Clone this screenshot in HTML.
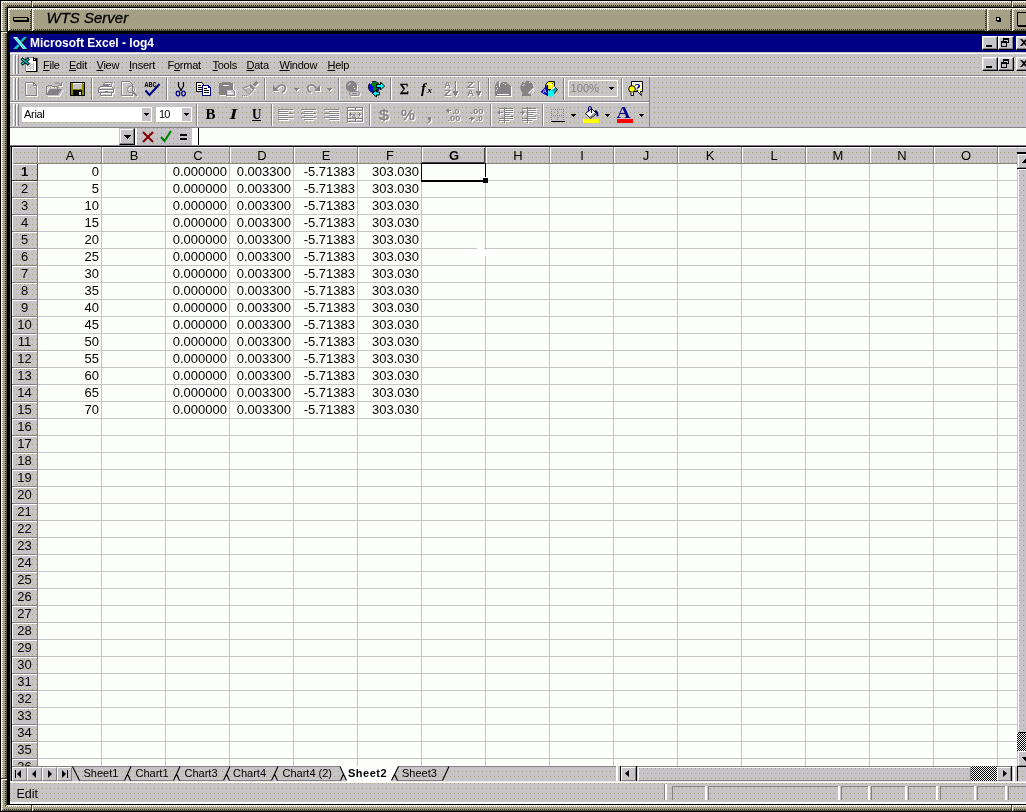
<!DOCTYPE html>
<html><head><meta charset="utf-8"><title>Microsoft Excel - log4</title>
<style>
*{box-sizing:border-box;margin:0;padding:0}
html,body{width:1026px;height:812px;overflow:hidden;background:#000}
body{position:relative;font-family:"Liberation Sans",sans-serif;font-size:11px;color:#000;-webkit-font-smoothing:none}
.a{position:absolute}
.dg{background-color:#c6c4c6;background-image:linear-gradient(to bottom,transparent 1px,#c6c4c6 1px),linear-gradient(to right,#a8a278 1px,#c6c4c6 1px);background-size:100% 5px,4px 100%}
.ol{background:#a5a085}
.hlh{background:repeating-linear-gradient(to right,#fbf8ee 0 1px,#a5a085 1px 2px)}
.hlv{background:repeating-linear-gradient(to bottom,#fbf8ee 0 1px,#a5a085 1px 2px)}
.shh{background:repeating-linear-gradient(to right,#a5a085 0 1px,#2e2c20 1px 2px)}
.shv{background:repeating-linear-gradient(to bottom,#a5a085 0 1px,#2e2c20 1px 2px)}
.lt{background:#f2efe2}
.dk{background:#4e4b3a}
.t{white-space:nowrap;line-height:1}
#r{position:absolute;left:0;top:0;width:1026px;height:812px;overflow:hidden;will-change:transform}
svg{position:absolute;overflow:visible}
.ew{stroke:#fff;fill:none}.ew .f{fill:#fff;stroke:none}.eg{stroke:#848284;fill:none}.eg .f{fill:#848284;stroke:none}
.m{font-size:11px;line-height:13px;text-align:left}
.m u{text-decoration:underline;text-underline-offset:1px}
</style></head>
<body>
<div id="r">
<div class="a ol" style="left:1px;top:1px;width:1030px;height:6px;"></div>
<div class="a ol" style="left:1px;top:1px;width:6px;height:810px;"></div>
<div class="a ol" style="left:1px;top:805px;width:1030px;height:6px;"></div>
<div class="a lt" style="left:1px;top:1px;width:1030px;height:1px;"></div>
<div class="a hlh" style="left:2px;top:2px;width:1030px;height:1px;"></div>
<div class="a lt" style="left:1px;top:1px;width:1px;height:810px;"></div>
<div class="a hlv" style="left:2px;top:2px;width:1px;height:808px;"></div>
<div class="a shh" style="left:6px;top:5px;width:1030px;height:1px;"></div>
<div class="a dk" style="left:7px;top:6px;width:1030px;height:1px;"></div>
<div class="a shv" style="left:5px;top:6px;width:1px;height:800px;"></div>
<div class="a dk" style="left:6px;top:7px;width:1px;height:798px;"></div>
<div class="a lt" style="left:7px;top:805px;width:1030px;height:1px;"></div>
<div class="a hlh" style="left:6px;top:806px;width:1030px;height:1px;"></div>
<div class="a shh" style="left:3px;top:809px;width:1030px;height:1px;"></div>
<div class="a dk" style="left:2px;top:810px;width:1030px;height:1px;"></div>
<div class="a " style="left:31px;top:1px;width:1px;height:6px;background:#3a382e"></div>
<div class="a lt" style="left:32px;top:1px;width:1px;height:6px;"></div>
<div class="a " style="left:1px;top:31px;width:6px;height:1px;background:#3a382e"></div>
<div class="a lt" style="left:1px;top:32px;width:6px;height:1px;"></div>
<div class="a " style="left:1px;top:778px;width:6px;height:1px;background:#3a382e"></div>
<div class="a lt" style="left:1px;top:779px;width:6px;height:1px;"></div>
<div class="a " style="left:1011px;top:1px;width:1px;height:6px;background:#3a382e"></div>
<div class="a lt" style="left:1012px;top:1px;width:1px;height:6px;"></div>
<div class="a " style="left:31px;top:805px;width:1px;height:6px;background:#3a382e"></div>
<div class="a lt" style="left:32px;top:805px;width:1px;height:6px;"></div>
<div class="a " style="left:1011px;top:805px;width:1px;height:6px;background:#3a382e"></div>
<div class="a lt" style="left:1012px;top:805px;width:1px;height:6px;"></div>
<div class="a ol" style="left:8px;top:8px;width:24px;height:23px;"></div>
<div class="a lt" style="left:8px;top:8px;width:24px;height:1px;"></div>
<div class="a hlh" style="left:8px;top:9px;width:24px;height:1px;"></div>
<div class="a lt" style="left:8px;top:8px;width:1px;height:23px;"></div>
<div class="a hlv" style="left:9px;top:9px;width:1px;height:22px;"></div>
<div class="a shh" style="left:10px;top:29px;width:22px;height:1px;"></div>
<div class="a dk" style="left:9px;top:30px;width:23px;height:1px;"></div>
<div class="a shv" style="left:30px;top:10px;width:1px;height:21px;"></div>
<div class="a dk" style="left:31px;top:9px;width:1px;height:22px;"></div>
<div class="a ol" style="left:32px;top:8px;width:955px;height:23px;"></div>
<div class="a lt" style="left:32px;top:8px;width:955px;height:1px;"></div>
<div class="a hlh" style="left:32px;top:9px;width:955px;height:1px;"></div>
<div class="a lt" style="left:32px;top:8px;width:1px;height:23px;"></div>
<div class="a hlv" style="left:33px;top:9px;width:1px;height:22px;"></div>
<div class="a shh" style="left:34px;top:29px;width:953px;height:1px;"></div>
<div class="a dk" style="left:33px;top:30px;width:954px;height:1px;"></div>
<div class="a shv" style="left:985px;top:10px;width:1px;height:21px;"></div>
<div class="a dk" style="left:986px;top:9px;width:1px;height:22px;"></div>
<div class="a ol" style="left:987px;top:8px;width:25px;height:23px;"></div>
<div class="a lt" style="left:987px;top:8px;width:25px;height:1px;"></div>
<div class="a hlh" style="left:987px;top:9px;width:25px;height:1px;"></div>
<div class="a lt" style="left:987px;top:8px;width:1px;height:23px;"></div>
<div class="a hlv" style="left:988px;top:9px;width:1px;height:22px;"></div>
<div class="a shh" style="left:989px;top:29px;width:23px;height:1px;"></div>
<div class="a dk" style="left:988px;top:30px;width:24px;height:1px;"></div>
<div class="a shv" style="left:1010px;top:10px;width:1px;height:21px;"></div>
<div class="a dk" style="left:1011px;top:9px;width:1px;height:22px;"></div>
<div class="a ol" style="left:1012px;top:8px;width:25px;height:23px;"></div>
<div class="a lt" style="left:1012px;top:8px;width:25px;height:1px;"></div>
<div class="a hlh" style="left:1012px;top:9px;width:25px;height:1px;"></div>
<div class="a lt" style="left:1012px;top:8px;width:1px;height:23px;"></div>
<div class="a hlv" style="left:1013px;top:9px;width:1px;height:22px;"></div>
<div class="a shh" style="left:1014px;top:29px;width:23px;height:1px;"></div>
<div class="a dk" style="left:1013px;top:30px;width:24px;height:1px;"></div>
<div class="a shv" style="left:1035px;top:10px;width:1px;height:21px;"></div>
<div class="a dk" style="left:1036px;top:9px;width:1px;height:22px;"></div>
<div class="a " style="left:13px;top:17px;width:15px;height:4px;background:#a5a085;border:1px solid #000;box-shadow:1px 1px 0 #000"></div>
<div class="a " style="left:996px;top:17px;width:4px;height:4px;background:#efebdc;border:1px solid #000;box-shadow:1px 1px 0 #000"></div>
<div class="a " style="left:1017px;top:12px;width:14px;height:14px;background:#a5a085;border:1px solid #000;box-shadow:1px 1px 0 #000"></div>
<div class="a t " style="left:46.5px;top:9px;font-size:15px;font-style:italic;line-height:17px;-webkit-text-stroke:0.3px #000">WTS Server</div>
<div class="a " style="left:10px;top:34px;width:1020px;height:18px;background:#000084"></div>
<div class="a t " style="left:30px;top:36px;font-size:12px;font-weight:bold;color:#fff;line-height:14px">Microsoft Excel - log4</div>
<div class="a dg" style="left:10px;top:52px;width:1020px;height:76px;"></div>
<div class="a " style="left:10px;top:52px;width:1020px;height:1px;background:#c6c4c6"></div>
<div class="a " style="left:10px;top:53px;width:1020px;height:1px;background:#ffffff"></div>
<div class="a " style="left:10px;top:75px;width:1020px;height:1px;background:#848284"></div>
<div class="a " style="left:10px;top:76px;width:1020px;height:1px;background:#ffffff"></div>
<div class="a " style="left:10px;top:126px;width:1020px;height:1px;background:#c6c4c6"></div>
<div class="a " style="left:10px;top:127px;width:1020px;height:1px;background:#848284"></div>
<div class="a " style="left:10px;top:101px;width:640px;height:1px;background:#848284"></div>
<div class="a " style="left:10px;top:102px;width:640px;height:1px;background:#ffffff"></div>
<div class="a " style="left:649px;top:77px;width:1px;height:50px;background:#848284"></div>
<div class="a " style="left:650px;top:77px;width:1px;height:50px;background:#c6c4c6"></div>
<div class="a " style="left:13px;top:55px;width:1px;height:19px;background:#ffffff"></div>
<div class="a " style="left:14px;top:55px;width:1px;height:19px;background:#c6c4c6"></div>
<div class="a " style="left:15px;top:55px;width:1px;height:19px;background:#848284"></div>
<div class="a " style="left:13px;top:55px;width:2px;height:1px;background:#ffffff"></div>
<div class="a " style="left:16px;top:55px;width:1px;height:19px;background:#ffffff"></div>
<div class="a " style="left:17px;top:55px;width:1px;height:19px;background:#c6c4c6"></div>
<div class="a " style="left:18px;top:55px;width:1px;height:19px;background:#848284"></div>
<div class="a " style="left:16px;top:55px;width:2px;height:1px;background:#ffffff"></div>
<div class="a " style="left:13px;top:78px;width:1px;height:22px;background:#ffffff"></div>
<div class="a " style="left:14px;top:78px;width:1px;height:22px;background:#c6c4c6"></div>
<div class="a " style="left:15px;top:78px;width:1px;height:22px;background:#848284"></div>
<div class="a " style="left:13px;top:78px;width:2px;height:1px;background:#ffffff"></div>
<div class="a " style="left:16px;top:78px;width:1px;height:22px;background:#ffffff"></div>
<div class="a " style="left:17px;top:78px;width:1px;height:22px;background:#c6c4c6"></div>
<div class="a " style="left:18px;top:78px;width:1px;height:22px;background:#848284"></div>
<div class="a " style="left:16px;top:78px;width:2px;height:1px;background:#ffffff"></div>
<div class="a " style="left:13px;top:104px;width:1px;height:22px;background:#ffffff"></div>
<div class="a " style="left:14px;top:104px;width:1px;height:22px;background:#c6c4c6"></div>
<div class="a " style="left:15px;top:104px;width:1px;height:22px;background:#848284"></div>
<div class="a " style="left:13px;top:104px;width:2px;height:1px;background:#ffffff"></div>
<div class="a " style="left:16px;top:104px;width:1px;height:22px;background:#ffffff"></div>
<div class="a " style="left:17px;top:104px;width:1px;height:22px;background:#c6c4c6"></div>
<div class="a " style="left:18px;top:104px;width:1px;height:22px;background:#848284"></div>
<div class="a " style="left:16px;top:104px;width:2px;height:1px;background:#ffffff"></div>
<div class="a t m" style="left:43.0px;top:59px;letter-spacing:-0.25px"><u>F</u>ile</div>
<div class="a t m" style="left:69.0px;top:59px;letter-spacing:-0.25px"><u>E</u>dit</div>
<div class="a t m" style="left:96.5px;top:59px;letter-spacing:-0.25px"><u>V</u>iew</div>
<div class="a t m" style="left:129.0px;top:59px;letter-spacing:-0.25px"><u>I</u>nsert</div>
<div class="a t m" style="left:167.5px;top:59px;letter-spacing:-0.25px">F<u>o</u>rmat</div>
<div class="a t m" style="left:212.5px;top:59px;letter-spacing:-0.25px"><u>T</u>ools</div>
<div class="a t m" style="left:246.5px;top:59px;letter-spacing:-0.25px"><u>D</u>ata</div>
<div class="a t m" style="left:279.5px;top:59px;letter-spacing:-0.25px"><u>W</u>indow</div>
<div class="a t m" style="left:327.5px;top:59px;letter-spacing:-0.25px"><u>H</u>elp</div>
<div class="a " style="left:982px;top:36px;width:16px;height:14px;background:#c6c4c6;border:1px solid;border-color:#fff #000 #000 #fff;box-shadow:inset -1px -1px 0 #848284,inset 1px 1px 0 #e0e0e0"></div>
<div class="a " style="left:986px;top:45px;width:6px;height:2px;background:#000000"></div>
<div class="a " style="left:998px;top:36px;width:16px;height:14px;background:#c6c4c6;border:1px solid;border-color:#fff #000 #000 #fff;box-shadow:inset -1px -1px 0 #848284,inset 1px 1px 0 #e0e0e0"></div>
<svg style="left:998px;top:36px" width="16" height="14" viewBox="0 0 16 14" shape-rendering="crispEdges" ><path d="M5 2h6v2h-6zM5 4h1v1h-1zM10 4h1v3h-2v-1h1zM3 5h6v2h-6zM3 7h1v4h-1zM8 7h1v4h-1zM4 10h4v1h-4z" fill="#000"/></svg>
<div class="a " style="left:1016px;top:36px;width:16px;height:14px;background:#c6c4c6;border:1px solid;border-color:#fff #000 #000 #fff;box-shadow:inset -1px -1px 0 #848284,inset 1px 1px 0 #e0e0e0"></div>
<svg style="left:1016px;top:36px" width="16" height="14" viewBox="0 0 16 14" shape-rendering="crispEdges" ><path d="M4 3h2l2 2l2-2h2l-3 3.5l3 3.5h-2l-2-2l-2 2h-2l3-3.5z" fill="#000" shape-rendering="auto"/></svg>
<div class="a " style="left:982px;top:57px;width:16px;height:14px;background:#c6c4c6;border:1px solid;border-color:#fff #000 #000 #fff;box-shadow:inset -1px -1px 0 #848284,inset 1px 1px 0 #e0e0e0"></div>
<div class="a " style="left:986px;top:66px;width:6px;height:2px;background:#000000"></div>
<div class="a " style="left:998px;top:57px;width:16px;height:14px;background:#c6c4c6;border:1px solid;border-color:#fff #000 #000 #fff;box-shadow:inset -1px -1px 0 #848284,inset 1px 1px 0 #e0e0e0"></div>
<svg style="left:998px;top:57px" width="16" height="14" viewBox="0 0 16 14" shape-rendering="crispEdges" ><path d="M5 2h6v2h-6zM5 4h1v1h-1zM10 4h1v3h-2v-1h1zM3 5h6v2h-6zM3 7h1v4h-1zM8 7h1v4h-1zM4 10h4v1h-4z" fill="#000"/></svg>
<div class="a " style="left:1016px;top:57px;width:16px;height:14px;background:#c6c4c6;border:1px solid;border-color:#fff #000 #000 #fff;box-shadow:inset -1px -1px 0 #848284,inset 1px 1px 0 #e0e0e0"></div>
<svg style="left:1016px;top:57px" width="16" height="14" viewBox="0 0 16 14" shape-rendering="crispEdges" ><path d="M4 3h2l2 2l2-2h2l-3 3.5l3 3.5h-2l-2-2l-2 2h-2l3-3.5z" fill="#000" shape-rendering="auto"/></svg>
<div class="a " style="left:10px;top:128px;width:1020px;height:17px;background:#fcfefc"></div>
<div class="a " style="left:119px;top:128px;width:16px;height:17px;background:#c6c4c6;border:1px solid;border-color:#c6c4c6 #000 #000 #c6c4c6;box-shadow:inset -1px -1px 0 #848284,inset 1px 1px 0 #fff"></div>
<svg style="left:120px;top:128px" width="15" height="17" viewBox="0 0 15 17" shape-rendering="crispEdges" ><path d="M4 7h7v1h-7zM5 8h5v1h-5zM6 9h3v1h-3zM7 10h1v1h-1z" fill="#000"/></svg>
<div class="a dg" style="left:137px;top:128px;width:55px;height:17px;"></div>
<svg style="left:142px;top:131px" width="12" height="12" viewBox="0 0 12 12" shape-rendering="crispEdges" ><path d="M1 1L11 11M11 1L1 11" stroke="#840000" stroke-width="2" fill="none" shape-rendering="auto"/></svg>
<svg style="left:160px;top:130px" width="12" height="13" viewBox="0 0 12 13" shape-rendering="crispEdges" ><path d="M1 7L4.5 11L11 1" stroke="#008200" stroke-width="2.2" fill="none" shape-rendering="auto"/></svg>
<div class="a " style="left:180px;top:134px;width:7px;height:2px;background:#000000"></div>
<div class="a " style="left:180px;top:138px;width:7px;height:2px;background:#000000"></div>
<div class="a " style="left:198px;top:128px;width:1px;height:17px;background:#000000"></div>
<div class="a " style="left:10px;top:145px;width:1020px;height:1px;background:#848284"></div>
<div class="a " style="left:10px;top:146px;width:1020px;height:1px;background:#000000"></div>
<div class="a " style="left:10px;top:147px;width:1020px;height:619px;background:#fcfefc"></div>
<div class="a " style="left:10px;top:147px;width:1px;height:619px;background:#848284"></div>
<div class="a " style="left:11px;top:147px;width:1px;height:619px;background:#000000"></div>
<div class="a dg" style="left:12px;top:147px;width:1006px;height:17px;"></div>
<div class="a " style="left:12px;top:147px;width:1006px;height:1px;background:#ffffff"></div>
<div class="a " style="left:12px;top:163px;width:1006px;height:1px;background:#848284"></div>
<div class="a " style="left:12px;top:147px;width:1px;height:17px;background:#ffffff"></div>
<div class="a " style="left:37px;top:147px;width:1px;height:17px;background:#848284"></div>
<div class="a " style="left:38px;top:147px;width:1px;height:16px;background:#ffffff"></div>
<div class="a " style="left:101px;top:147px;width:1px;height:17px;background:#848284"></div>
<div class="a t " style="left:38px;top:149px;width:64px;text-align:center;font-size:13px;line-height:14px">A</div>
<div class="a " style="left:102px;top:147px;width:1px;height:16px;background:#ffffff"></div>
<div class="a " style="left:165px;top:147px;width:1px;height:17px;background:#848284"></div>
<div class="a t " style="left:102px;top:149px;width:64px;text-align:center;font-size:13px;line-height:14px">B</div>
<div class="a " style="left:166px;top:147px;width:1px;height:16px;background:#ffffff"></div>
<div class="a " style="left:229px;top:147px;width:1px;height:17px;background:#848284"></div>
<div class="a t " style="left:166px;top:149px;width:64px;text-align:center;font-size:13px;line-height:14px">C</div>
<div class="a " style="left:230px;top:147px;width:1px;height:16px;background:#ffffff"></div>
<div class="a " style="left:293px;top:147px;width:1px;height:17px;background:#848284"></div>
<div class="a t " style="left:230px;top:149px;width:64px;text-align:center;font-size:13px;line-height:14px">D</div>
<div class="a " style="left:294px;top:147px;width:1px;height:16px;background:#ffffff"></div>
<div class="a " style="left:357px;top:147px;width:1px;height:17px;background:#848284"></div>
<div class="a t " style="left:294px;top:149px;width:64px;text-align:center;font-size:13px;line-height:14px">E</div>
<div class="a " style="left:358px;top:147px;width:1px;height:16px;background:#ffffff"></div>
<div class="a " style="left:421px;top:147px;width:1px;height:17px;background:#848284"></div>
<div class="a t " style="left:358px;top:149px;width:64px;text-align:center;font-size:13px;line-height:14px">F</div>
<div class="a " style="left:422px;top:147px;width:1px;height:16px;background:#ffffff"></div>
<div class="a " style="left:485px;top:147px;width:1px;height:17px;background:#848284"></div>
<div class="a t " style="left:422px;top:149px;width:64px;text-align:center;font-size:13px;font-weight:bold;line-height:14px">G</div>
<div class="a " style="left:486px;top:147px;width:1px;height:16px;background:#ffffff"></div>
<div class="a " style="left:549px;top:147px;width:1px;height:17px;background:#848284"></div>
<div class="a t " style="left:486px;top:149px;width:64px;text-align:center;font-size:13px;line-height:14px">H</div>
<div class="a " style="left:550px;top:147px;width:1px;height:16px;background:#ffffff"></div>
<div class="a " style="left:613px;top:147px;width:1px;height:17px;background:#848284"></div>
<div class="a t " style="left:550px;top:149px;width:64px;text-align:center;font-size:13px;line-height:14px">I</div>
<div class="a " style="left:614px;top:147px;width:1px;height:16px;background:#ffffff"></div>
<div class="a " style="left:677px;top:147px;width:1px;height:17px;background:#848284"></div>
<div class="a t " style="left:614px;top:149px;width:64px;text-align:center;font-size:13px;line-height:14px">J</div>
<div class="a " style="left:678px;top:147px;width:1px;height:16px;background:#ffffff"></div>
<div class="a " style="left:741px;top:147px;width:1px;height:17px;background:#848284"></div>
<div class="a t " style="left:678px;top:149px;width:64px;text-align:center;font-size:13px;line-height:14px">K</div>
<div class="a " style="left:742px;top:147px;width:1px;height:16px;background:#ffffff"></div>
<div class="a " style="left:805px;top:147px;width:1px;height:17px;background:#848284"></div>
<div class="a t " style="left:742px;top:149px;width:64px;text-align:center;font-size:13px;line-height:14px">L</div>
<div class="a " style="left:806px;top:147px;width:1px;height:16px;background:#ffffff"></div>
<div class="a " style="left:869px;top:147px;width:1px;height:17px;background:#848284"></div>
<div class="a t " style="left:806px;top:149px;width:64px;text-align:center;font-size:13px;line-height:14px">M</div>
<div class="a " style="left:870px;top:147px;width:1px;height:16px;background:#ffffff"></div>
<div class="a " style="left:933px;top:147px;width:1px;height:17px;background:#848284"></div>
<div class="a t " style="left:870px;top:149px;width:64px;text-align:center;font-size:13px;line-height:14px">N</div>
<div class="a " style="left:934px;top:147px;width:1px;height:16px;background:#ffffff"></div>
<div class="a " style="left:997px;top:147px;width:1px;height:17px;background:#848284"></div>
<div class="a t " style="left:934px;top:149px;width:64px;text-align:center;font-size:13px;line-height:14px">O</div>
<div class="a " style="left:998px;top:147px;width:1px;height:16px;background:#ffffff"></div>
<div class="a dg" style="left:12px;top:164px;width:26px;height:602px;"></div>
<div class="a " style="left:37px;top:164px;width:1px;height:602px;background:#848284"></div>
<div class="a " style="left:12px;top:164px;width:1px;height:602px;background:#ffffff"></div>
<div class="a " style="left:13px;top:164px;width:24px;height:1px;background:#ffffff"></div>
<div class="a " style="left:12px;top:180px;width:26px;height:1px;background:#848284"></div>
<div class="a t " style="left:12px;top:165px;left:12px;width:25px;text-align:center;font-size:13px;line-height:14px;font-weight:bold">1</div>
<div class="a " style="left:13px;top:181px;width:24px;height:1px;background:#ffffff"></div>
<div class="a " style="left:12px;top:197px;width:26px;height:1px;background:#848284"></div>
<div class="a t " style="left:12px;top:182px;left:12px;width:25px;text-align:center;font-size:13px;line-height:14px">2</div>
<div class="a " style="left:13px;top:198px;width:24px;height:1px;background:#ffffff"></div>
<div class="a " style="left:12px;top:214px;width:26px;height:1px;background:#848284"></div>
<div class="a t " style="left:12px;top:199px;left:12px;width:25px;text-align:center;font-size:13px;line-height:14px">3</div>
<div class="a " style="left:13px;top:215px;width:24px;height:1px;background:#ffffff"></div>
<div class="a " style="left:12px;top:231px;width:26px;height:1px;background:#848284"></div>
<div class="a t " style="left:12px;top:216px;left:12px;width:25px;text-align:center;font-size:13px;line-height:14px">4</div>
<div class="a " style="left:13px;top:232px;width:24px;height:1px;background:#ffffff"></div>
<div class="a " style="left:12px;top:248px;width:26px;height:1px;background:#848284"></div>
<div class="a t " style="left:12px;top:233px;left:12px;width:25px;text-align:center;font-size:13px;line-height:14px">5</div>
<div class="a " style="left:13px;top:249px;width:24px;height:1px;background:#ffffff"></div>
<div class="a " style="left:12px;top:265px;width:26px;height:1px;background:#848284"></div>
<div class="a t " style="left:12px;top:250px;left:12px;width:25px;text-align:center;font-size:13px;line-height:14px">6</div>
<div class="a " style="left:13px;top:266px;width:24px;height:1px;background:#ffffff"></div>
<div class="a " style="left:12px;top:282px;width:26px;height:1px;background:#848284"></div>
<div class="a t " style="left:12px;top:267px;left:12px;width:25px;text-align:center;font-size:13px;line-height:14px">7</div>
<div class="a " style="left:13px;top:283px;width:24px;height:1px;background:#ffffff"></div>
<div class="a " style="left:12px;top:299px;width:26px;height:1px;background:#848284"></div>
<div class="a t " style="left:12px;top:284px;left:12px;width:25px;text-align:center;font-size:13px;line-height:14px">8</div>
<div class="a " style="left:13px;top:300px;width:24px;height:1px;background:#ffffff"></div>
<div class="a " style="left:12px;top:316px;width:26px;height:1px;background:#848284"></div>
<div class="a t " style="left:12px;top:301px;left:12px;width:25px;text-align:center;font-size:13px;line-height:14px">9</div>
<div class="a " style="left:13px;top:317px;width:24px;height:1px;background:#ffffff"></div>
<div class="a " style="left:12px;top:333px;width:26px;height:1px;background:#848284"></div>
<div class="a t " style="left:12px;top:318px;left:12px;width:25px;text-align:center;font-size:13px;line-height:14px">10</div>
<div class="a " style="left:13px;top:334px;width:24px;height:1px;background:#ffffff"></div>
<div class="a " style="left:12px;top:350px;width:26px;height:1px;background:#848284"></div>
<div class="a t " style="left:12px;top:335px;left:12px;width:25px;text-align:center;font-size:13px;line-height:14px">11</div>
<div class="a " style="left:13px;top:351px;width:24px;height:1px;background:#ffffff"></div>
<div class="a " style="left:12px;top:367px;width:26px;height:1px;background:#848284"></div>
<div class="a t " style="left:12px;top:352px;left:12px;width:25px;text-align:center;font-size:13px;line-height:14px">12</div>
<div class="a " style="left:13px;top:368px;width:24px;height:1px;background:#ffffff"></div>
<div class="a " style="left:12px;top:384px;width:26px;height:1px;background:#848284"></div>
<div class="a t " style="left:12px;top:369px;left:12px;width:25px;text-align:center;font-size:13px;line-height:14px">13</div>
<div class="a " style="left:13px;top:385px;width:24px;height:1px;background:#ffffff"></div>
<div class="a " style="left:12px;top:401px;width:26px;height:1px;background:#848284"></div>
<div class="a t " style="left:12px;top:386px;left:12px;width:25px;text-align:center;font-size:13px;line-height:14px">14</div>
<div class="a " style="left:13px;top:402px;width:24px;height:1px;background:#ffffff"></div>
<div class="a " style="left:12px;top:418px;width:26px;height:1px;background:#848284"></div>
<div class="a t " style="left:12px;top:403px;left:12px;width:25px;text-align:center;font-size:13px;line-height:14px">15</div>
<div class="a " style="left:13px;top:419px;width:24px;height:1px;background:#ffffff"></div>
<div class="a " style="left:12px;top:435px;width:26px;height:1px;background:#848284"></div>
<div class="a t " style="left:12px;top:420px;left:12px;width:25px;text-align:center;font-size:13px;line-height:14px">16</div>
<div class="a " style="left:13px;top:436px;width:24px;height:1px;background:#ffffff"></div>
<div class="a " style="left:12px;top:452px;width:26px;height:1px;background:#848284"></div>
<div class="a t " style="left:12px;top:437px;left:12px;width:25px;text-align:center;font-size:13px;line-height:14px">17</div>
<div class="a " style="left:13px;top:453px;width:24px;height:1px;background:#ffffff"></div>
<div class="a " style="left:12px;top:469px;width:26px;height:1px;background:#848284"></div>
<div class="a t " style="left:12px;top:454px;left:12px;width:25px;text-align:center;font-size:13px;line-height:14px">18</div>
<div class="a " style="left:13px;top:470px;width:24px;height:1px;background:#ffffff"></div>
<div class="a " style="left:12px;top:486px;width:26px;height:1px;background:#848284"></div>
<div class="a t " style="left:12px;top:471px;left:12px;width:25px;text-align:center;font-size:13px;line-height:14px">19</div>
<div class="a " style="left:13px;top:487px;width:24px;height:1px;background:#ffffff"></div>
<div class="a " style="left:12px;top:503px;width:26px;height:1px;background:#848284"></div>
<div class="a t " style="left:12px;top:488px;left:12px;width:25px;text-align:center;font-size:13px;line-height:14px">20</div>
<div class="a " style="left:13px;top:504px;width:24px;height:1px;background:#ffffff"></div>
<div class="a " style="left:12px;top:520px;width:26px;height:1px;background:#848284"></div>
<div class="a t " style="left:12px;top:505px;left:12px;width:25px;text-align:center;font-size:13px;line-height:14px">21</div>
<div class="a " style="left:13px;top:521px;width:24px;height:1px;background:#ffffff"></div>
<div class="a " style="left:12px;top:537px;width:26px;height:1px;background:#848284"></div>
<div class="a t " style="left:12px;top:522px;left:12px;width:25px;text-align:center;font-size:13px;line-height:14px">22</div>
<div class="a " style="left:13px;top:538px;width:24px;height:1px;background:#ffffff"></div>
<div class="a " style="left:12px;top:554px;width:26px;height:1px;background:#848284"></div>
<div class="a t " style="left:12px;top:539px;left:12px;width:25px;text-align:center;font-size:13px;line-height:14px">23</div>
<div class="a " style="left:13px;top:555px;width:24px;height:1px;background:#ffffff"></div>
<div class="a " style="left:12px;top:571px;width:26px;height:1px;background:#848284"></div>
<div class="a t " style="left:12px;top:556px;left:12px;width:25px;text-align:center;font-size:13px;line-height:14px">24</div>
<div class="a " style="left:13px;top:572px;width:24px;height:1px;background:#ffffff"></div>
<div class="a " style="left:12px;top:588px;width:26px;height:1px;background:#848284"></div>
<div class="a t " style="left:12px;top:573px;left:12px;width:25px;text-align:center;font-size:13px;line-height:14px">25</div>
<div class="a " style="left:13px;top:589px;width:24px;height:1px;background:#ffffff"></div>
<div class="a " style="left:12px;top:605px;width:26px;height:1px;background:#848284"></div>
<div class="a t " style="left:12px;top:590px;left:12px;width:25px;text-align:center;font-size:13px;line-height:14px">26</div>
<div class="a " style="left:13px;top:606px;width:24px;height:1px;background:#ffffff"></div>
<div class="a " style="left:12px;top:622px;width:26px;height:1px;background:#848284"></div>
<div class="a t " style="left:12px;top:607px;left:12px;width:25px;text-align:center;font-size:13px;line-height:14px">27</div>
<div class="a " style="left:13px;top:623px;width:24px;height:1px;background:#ffffff"></div>
<div class="a " style="left:12px;top:639px;width:26px;height:1px;background:#848284"></div>
<div class="a t " style="left:12px;top:624px;left:12px;width:25px;text-align:center;font-size:13px;line-height:14px">28</div>
<div class="a " style="left:13px;top:640px;width:24px;height:1px;background:#ffffff"></div>
<div class="a " style="left:12px;top:656px;width:26px;height:1px;background:#848284"></div>
<div class="a t " style="left:12px;top:641px;left:12px;width:25px;text-align:center;font-size:13px;line-height:14px">29</div>
<div class="a " style="left:13px;top:657px;width:24px;height:1px;background:#ffffff"></div>
<div class="a " style="left:12px;top:673px;width:26px;height:1px;background:#848284"></div>
<div class="a t " style="left:12px;top:658px;left:12px;width:25px;text-align:center;font-size:13px;line-height:14px">30</div>
<div class="a " style="left:13px;top:674px;width:24px;height:1px;background:#ffffff"></div>
<div class="a " style="left:12px;top:690px;width:26px;height:1px;background:#848284"></div>
<div class="a t " style="left:12px;top:675px;left:12px;width:25px;text-align:center;font-size:13px;line-height:14px">31</div>
<div class="a " style="left:13px;top:691px;width:24px;height:1px;background:#ffffff"></div>
<div class="a " style="left:12px;top:707px;width:26px;height:1px;background:#848284"></div>
<div class="a t " style="left:12px;top:692px;left:12px;width:25px;text-align:center;font-size:13px;line-height:14px">32</div>
<div class="a " style="left:13px;top:708px;width:24px;height:1px;background:#ffffff"></div>
<div class="a " style="left:12px;top:724px;width:26px;height:1px;background:#848284"></div>
<div class="a t " style="left:12px;top:709px;left:12px;width:25px;text-align:center;font-size:13px;line-height:14px">33</div>
<div class="a " style="left:13px;top:725px;width:24px;height:1px;background:#ffffff"></div>
<div class="a " style="left:12px;top:741px;width:26px;height:1px;background:#848284"></div>
<div class="a t " style="left:12px;top:726px;left:12px;width:25px;text-align:center;font-size:13px;line-height:14px">34</div>
<div class="a " style="left:13px;top:742px;width:24px;height:1px;background:#ffffff"></div>
<div class="a " style="left:12px;top:758px;width:26px;height:1px;background:#848284"></div>
<div class="a t " style="left:12px;top:743px;left:12px;width:25px;text-align:center;font-size:13px;line-height:14px">35</div>
<div class="a " style="left:13px;top:759px;width:24px;height:1px;background:#ffffff"></div>
<div class="a " style="left:12px;top:775px;width:26px;height:1px;background:#848284"></div>
<div class="a t " style="left:12px;top:760px;left:12px;width:25px;text-align:center;font-size:13px;line-height:14px">36</div>
<div class="a " style="left:101px;top:164px;width:1px;height:602px;background:#c6c4c6"></div>
<div class="a " style="left:165px;top:164px;width:1px;height:602px;background:#c6c4c6"></div>
<div class="a " style="left:229px;top:164px;width:1px;height:602px;background:#c6c4c6"></div>
<div class="a " style="left:293px;top:164px;width:1px;height:602px;background:#c6c4c6"></div>
<div class="a " style="left:357px;top:164px;width:1px;height:602px;background:#c6c4c6"></div>
<div class="a " style="left:421px;top:164px;width:1px;height:602px;background:#c6c4c6"></div>
<div class="a " style="left:485px;top:164px;width:1px;height:602px;background:#c6c4c6"></div>
<div class="a " style="left:549px;top:164px;width:1px;height:602px;background:#c6c4c6"></div>
<div class="a " style="left:613px;top:164px;width:1px;height:602px;background:#c6c4c6"></div>
<div class="a " style="left:677px;top:164px;width:1px;height:602px;background:#c6c4c6"></div>
<div class="a " style="left:741px;top:164px;width:1px;height:602px;background:#c6c4c6"></div>
<div class="a " style="left:805px;top:164px;width:1px;height:602px;background:#c6c4c6"></div>
<div class="a " style="left:869px;top:164px;width:1px;height:602px;background:#c6c4c6"></div>
<div class="a " style="left:933px;top:164px;width:1px;height:602px;background:#c6c4c6"></div>
<div class="a " style="left:997px;top:164px;width:1px;height:602px;background:#c6c4c6"></div>
<div class="a " style="left:1061px;top:164px;width:1px;height:602px;background:#c6c4c6"></div>
<div class="a " style="left:38px;top:180px;width:980px;height:1px;background:#c6c4c6"></div>
<div class="a " style="left:38px;top:197px;width:980px;height:1px;background:#c6c4c6"></div>
<div class="a " style="left:38px;top:214px;width:980px;height:1px;background:#c6c4c6"></div>
<div class="a " style="left:38px;top:231px;width:980px;height:1px;background:#c6c4c6"></div>
<div class="a " style="left:38px;top:248px;width:980px;height:1px;background:#c6c4c6"></div>
<div class="a " style="left:38px;top:265px;width:980px;height:1px;background:#c6c4c6"></div>
<div class="a " style="left:38px;top:282px;width:980px;height:1px;background:#c6c4c6"></div>
<div class="a " style="left:38px;top:299px;width:980px;height:1px;background:#c6c4c6"></div>
<div class="a " style="left:38px;top:316px;width:980px;height:1px;background:#c6c4c6"></div>
<div class="a " style="left:38px;top:333px;width:980px;height:1px;background:#c6c4c6"></div>
<div class="a " style="left:38px;top:350px;width:980px;height:1px;background:#c6c4c6"></div>
<div class="a " style="left:38px;top:367px;width:980px;height:1px;background:#c6c4c6"></div>
<div class="a " style="left:38px;top:384px;width:980px;height:1px;background:#c6c4c6"></div>
<div class="a " style="left:38px;top:401px;width:980px;height:1px;background:#c6c4c6"></div>
<div class="a " style="left:38px;top:418px;width:980px;height:1px;background:#c6c4c6"></div>
<div class="a " style="left:38px;top:435px;width:980px;height:1px;background:#c6c4c6"></div>
<div class="a " style="left:38px;top:452px;width:980px;height:1px;background:#c6c4c6"></div>
<div class="a " style="left:38px;top:469px;width:980px;height:1px;background:#c6c4c6"></div>
<div class="a " style="left:38px;top:486px;width:980px;height:1px;background:#c6c4c6"></div>
<div class="a " style="left:38px;top:503px;width:980px;height:1px;background:#c6c4c6"></div>
<div class="a " style="left:38px;top:520px;width:980px;height:1px;background:#c6c4c6"></div>
<div class="a " style="left:38px;top:537px;width:980px;height:1px;background:#c6c4c6"></div>
<div class="a " style="left:38px;top:554px;width:980px;height:1px;background:#c6c4c6"></div>
<div class="a " style="left:38px;top:571px;width:980px;height:1px;background:#c6c4c6"></div>
<div class="a " style="left:38px;top:588px;width:980px;height:1px;background:#c6c4c6"></div>
<div class="a " style="left:38px;top:605px;width:980px;height:1px;background:#c6c4c6"></div>
<div class="a " style="left:38px;top:622px;width:980px;height:1px;background:#c6c4c6"></div>
<div class="a " style="left:38px;top:639px;width:980px;height:1px;background:#c6c4c6"></div>
<div class="a " style="left:38px;top:656px;width:980px;height:1px;background:#c6c4c6"></div>
<div class="a " style="left:38px;top:673px;width:980px;height:1px;background:#c6c4c6"></div>
<div class="a " style="left:38px;top:690px;width:980px;height:1px;background:#c6c4c6"></div>
<div class="a " style="left:38px;top:707px;width:980px;height:1px;background:#c6c4c6"></div>
<div class="a " style="left:38px;top:724px;width:980px;height:1px;background:#c6c4c6"></div>
<div class="a " style="left:38px;top:741px;width:980px;height:1px;background:#c6c4c6"></div>
<div class="a " style="left:38px;top:758px;width:980px;height:1px;background:#c6c4c6"></div>
<div class="a " style="left:38px;top:775px;width:980px;height:1px;background:#c6c4c6"></div>
<div class="a t " style="left:38px;top:165px;width:61px;text-align:right;font-size:13px;line-height:14px">0</div>
<div class="a t " style="left:166px;top:165px;width:61px;text-align:right;font-size:13px;line-height:14px">0.000000</div>
<div class="a t " style="left:230px;top:165px;width:61px;text-align:right;font-size:13px;line-height:14px">0.003300</div>
<div class="a t " style="left:294px;top:165px;width:61px;text-align:right;font-size:13px;line-height:14px">-5.71383</div>
<div class="a t " style="left:358px;top:165px;width:61px;text-align:right;font-size:13px;line-height:14px">303.030</div>
<div class="a t " style="left:38px;top:182px;width:61px;text-align:right;font-size:13px;line-height:14px">5</div>
<div class="a t " style="left:166px;top:182px;width:61px;text-align:right;font-size:13px;line-height:14px">0.000000</div>
<div class="a t " style="left:230px;top:182px;width:61px;text-align:right;font-size:13px;line-height:14px">0.003300</div>
<div class="a t " style="left:294px;top:182px;width:61px;text-align:right;font-size:13px;line-height:14px">-5.71383</div>
<div class="a t " style="left:358px;top:182px;width:61px;text-align:right;font-size:13px;line-height:14px">303.030</div>
<div class="a t " style="left:38px;top:199px;width:61px;text-align:right;font-size:13px;line-height:14px">10</div>
<div class="a t " style="left:166px;top:199px;width:61px;text-align:right;font-size:13px;line-height:14px">0.000000</div>
<div class="a t " style="left:230px;top:199px;width:61px;text-align:right;font-size:13px;line-height:14px">0.003300</div>
<div class="a t " style="left:294px;top:199px;width:61px;text-align:right;font-size:13px;line-height:14px">-5.71383</div>
<div class="a t " style="left:358px;top:199px;width:61px;text-align:right;font-size:13px;line-height:14px">303.030</div>
<div class="a t " style="left:38px;top:216px;width:61px;text-align:right;font-size:13px;line-height:14px">15</div>
<div class="a t " style="left:166px;top:216px;width:61px;text-align:right;font-size:13px;line-height:14px">0.000000</div>
<div class="a t " style="left:230px;top:216px;width:61px;text-align:right;font-size:13px;line-height:14px">0.003300</div>
<div class="a t " style="left:294px;top:216px;width:61px;text-align:right;font-size:13px;line-height:14px">-5.71383</div>
<div class="a t " style="left:358px;top:216px;width:61px;text-align:right;font-size:13px;line-height:14px">303.030</div>
<div class="a t " style="left:38px;top:233px;width:61px;text-align:right;font-size:13px;line-height:14px">20</div>
<div class="a t " style="left:166px;top:233px;width:61px;text-align:right;font-size:13px;line-height:14px">0.000000</div>
<div class="a t " style="left:230px;top:233px;width:61px;text-align:right;font-size:13px;line-height:14px">0.003300</div>
<div class="a t " style="left:294px;top:233px;width:61px;text-align:right;font-size:13px;line-height:14px">-5.71383</div>
<div class="a t " style="left:358px;top:233px;width:61px;text-align:right;font-size:13px;line-height:14px">303.030</div>
<div class="a t " style="left:38px;top:250px;width:61px;text-align:right;font-size:13px;line-height:14px">25</div>
<div class="a t " style="left:166px;top:250px;width:61px;text-align:right;font-size:13px;line-height:14px">0.000000</div>
<div class="a t " style="left:230px;top:250px;width:61px;text-align:right;font-size:13px;line-height:14px">0.003300</div>
<div class="a t " style="left:294px;top:250px;width:61px;text-align:right;font-size:13px;line-height:14px">-5.71383</div>
<div class="a t " style="left:358px;top:250px;width:61px;text-align:right;font-size:13px;line-height:14px">303.030</div>
<div class="a t " style="left:38px;top:267px;width:61px;text-align:right;font-size:13px;line-height:14px">30</div>
<div class="a t " style="left:166px;top:267px;width:61px;text-align:right;font-size:13px;line-height:14px">0.000000</div>
<div class="a t " style="left:230px;top:267px;width:61px;text-align:right;font-size:13px;line-height:14px">0.003300</div>
<div class="a t " style="left:294px;top:267px;width:61px;text-align:right;font-size:13px;line-height:14px">-5.71383</div>
<div class="a t " style="left:358px;top:267px;width:61px;text-align:right;font-size:13px;line-height:14px">303.030</div>
<div class="a t " style="left:38px;top:284px;width:61px;text-align:right;font-size:13px;line-height:14px">35</div>
<div class="a t " style="left:166px;top:284px;width:61px;text-align:right;font-size:13px;line-height:14px">0.000000</div>
<div class="a t " style="left:230px;top:284px;width:61px;text-align:right;font-size:13px;line-height:14px">0.003300</div>
<div class="a t " style="left:294px;top:284px;width:61px;text-align:right;font-size:13px;line-height:14px">-5.71383</div>
<div class="a t " style="left:358px;top:284px;width:61px;text-align:right;font-size:13px;line-height:14px">303.030</div>
<div class="a t " style="left:38px;top:301px;width:61px;text-align:right;font-size:13px;line-height:14px">40</div>
<div class="a t " style="left:166px;top:301px;width:61px;text-align:right;font-size:13px;line-height:14px">0.000000</div>
<div class="a t " style="left:230px;top:301px;width:61px;text-align:right;font-size:13px;line-height:14px">0.003300</div>
<div class="a t " style="left:294px;top:301px;width:61px;text-align:right;font-size:13px;line-height:14px">-5.71383</div>
<div class="a t " style="left:358px;top:301px;width:61px;text-align:right;font-size:13px;line-height:14px">303.030</div>
<div class="a t " style="left:38px;top:318px;width:61px;text-align:right;font-size:13px;line-height:14px">45</div>
<div class="a t " style="left:166px;top:318px;width:61px;text-align:right;font-size:13px;line-height:14px">0.000000</div>
<div class="a t " style="left:230px;top:318px;width:61px;text-align:right;font-size:13px;line-height:14px">0.003300</div>
<div class="a t " style="left:294px;top:318px;width:61px;text-align:right;font-size:13px;line-height:14px">-5.71383</div>
<div class="a t " style="left:358px;top:318px;width:61px;text-align:right;font-size:13px;line-height:14px">303.030</div>
<div class="a t " style="left:38px;top:335px;width:61px;text-align:right;font-size:13px;line-height:14px">50</div>
<div class="a t " style="left:166px;top:335px;width:61px;text-align:right;font-size:13px;line-height:14px">0.000000</div>
<div class="a t " style="left:230px;top:335px;width:61px;text-align:right;font-size:13px;line-height:14px">0.003300</div>
<div class="a t " style="left:294px;top:335px;width:61px;text-align:right;font-size:13px;line-height:14px">-5.71383</div>
<div class="a t " style="left:358px;top:335px;width:61px;text-align:right;font-size:13px;line-height:14px">303.030</div>
<div class="a t " style="left:38px;top:352px;width:61px;text-align:right;font-size:13px;line-height:14px">55</div>
<div class="a t " style="left:166px;top:352px;width:61px;text-align:right;font-size:13px;line-height:14px">0.000000</div>
<div class="a t " style="left:230px;top:352px;width:61px;text-align:right;font-size:13px;line-height:14px">0.003300</div>
<div class="a t " style="left:294px;top:352px;width:61px;text-align:right;font-size:13px;line-height:14px">-5.71383</div>
<div class="a t " style="left:358px;top:352px;width:61px;text-align:right;font-size:13px;line-height:14px">303.030</div>
<div class="a t " style="left:38px;top:369px;width:61px;text-align:right;font-size:13px;line-height:14px">60</div>
<div class="a t " style="left:166px;top:369px;width:61px;text-align:right;font-size:13px;line-height:14px">0.000000</div>
<div class="a t " style="left:230px;top:369px;width:61px;text-align:right;font-size:13px;line-height:14px">0.003300</div>
<div class="a t " style="left:294px;top:369px;width:61px;text-align:right;font-size:13px;line-height:14px">-5.71383</div>
<div class="a t " style="left:358px;top:369px;width:61px;text-align:right;font-size:13px;line-height:14px">303.030</div>
<div class="a t " style="left:38px;top:386px;width:61px;text-align:right;font-size:13px;line-height:14px">65</div>
<div class="a t " style="left:166px;top:386px;width:61px;text-align:right;font-size:13px;line-height:14px">0.000000</div>
<div class="a t " style="left:230px;top:386px;width:61px;text-align:right;font-size:13px;line-height:14px">0.003300</div>
<div class="a t " style="left:294px;top:386px;width:61px;text-align:right;font-size:13px;line-height:14px">-5.71383</div>
<div class="a t " style="left:358px;top:386px;width:61px;text-align:right;font-size:13px;line-height:14px">303.030</div>
<div class="a t " style="left:38px;top:403px;width:61px;text-align:right;font-size:13px;line-height:14px">70</div>
<div class="a t " style="left:166px;top:403px;width:61px;text-align:right;font-size:13px;line-height:14px">0.000000</div>
<div class="a t " style="left:230px;top:403px;width:61px;text-align:right;font-size:13px;line-height:14px">0.003300</div>
<div class="a t " style="left:294px;top:403px;width:61px;text-align:right;font-size:13px;line-height:14px">-5.71383</div>
<div class="a t " style="left:358px;top:403px;width:61px;text-align:right;font-size:13px;line-height:14px">303.030</div>
<div class="a " style="left:421px;top:163px;width:65px;height:19px;border:1px solid #000;border-bottom-width:2px"></div>
<div class="a " style="left:483px;top:178px;width:5px;height:5px;background:#000000"></div>
<div class="a " style="left:482px;top:177px;width:6px;height:1px;background:#ffffff"></div>
<div class="a " style="left:482px;top:177px;width:1px;height:3px;background:#ffffff"></div>
<div class="a " style="left:37px;top:164px;width:1px;height:17px;background:#424142"></div>
<div class="a " style="left:12px;top:180px;width:26px;height:1px;background:#424142"></div>
<div class="a " style="left:422px;top:147px;width:63px;height:1px;background:#ffffff"></div>
<div class="a " style="left:422px;top:147px;width:1px;height:16px;background:#ffffff"></div>
<div class="a " style="left:484px;top:148px;width:1px;height:16px;background:#424142"></div>
<div class="a " style="left:422px;top:162px;width:63px;height:1px;background:#424142"></div>
<div class="a dg" style="left:1017px;top:147px;width:12px;height:619px;"></div>
<div class="a " style="left:1017px;top:147px;width:1px;height:619px;background:#c6c4c6"></div>
<div class="a " style="left:1018px;top:147px;width:10px;height:6px;background:#c6c4c6"></div>
<div class="a " style="left:1018px;top:147px;width:10px;height:1px;background:#ffffff"></div>
<div class="a " style="left:1017px;top:152px;width:12px;height:2px;background:#000000"></div>
<div class="a " style="left:1018px;top:154px;width:14px;height:14px;background:#c6c4c6;border:1px solid;border-color:#fff #848284 #848284 #fff"></div>
<svg style="left:1019px;top:158px" width="8" height="5" viewBox="0 0 8 5" shape-rendering="crispEdges" ><path d="M3 4h7v1h-7zM4 3h5v1h-5zM5 2h3v1h-3zM6 1h1v1h-1z" fill="#000"/></svg>
<div class="a " style="left:1017px;top:168px;width:12px;height:1px;background:#000000"></div>
<div class="a dg" style="left:1018px;top:169px;width:14px;height:564px;border:1px solid;border-color:#fff #848284 #000 #fff"></div>
<div class="a " style="left:1017px;top:733px;width:12px;height:18px;background:repeating-conic-gradient(#000 0 25%,#fff 0 50%) 0 0/2px 2px"></div>
<div class="a " style="left:1018px;top:751px;width:14px;height:15px;background:#c6c4c6;border:1px solid;border-color:#fff #848284 #848284 #fff"></div>
<svg style="left:1019px;top:756px" width="8" height="5" viewBox="0 0 8 5" shape-rendering="crispEdges" ><path d="M3 1h7v1h-7zM4 2h5v1h-5zM5 3h3v1h-3zM6 4h1v1h-1z" fill="#000"/></svg>
<div class="a " style="left:477px;top:245px;width:7px;height:15px;background:#fff"></div>
<div class="a " style="left:473px;top:250px;width:15px;height:6px;background:#fff"></div>
<div class="a dg" style="left:10px;top:766px;width:1020px;height:15px;"></div>
<div class="a " style="left:10px;top:766px;width:1020px;height:1px;background:#848284"></div>
<div class="a " style="left:10px;top:781px;width:1020px;height:1px;background:#e6e5e6"></div>
<div class="a " style="left:10px;top:782px;width:1020px;height:1px;background:#ffffff"></div>
<div class="a " style="left:10px;top:766px;width:2px;height:15px;background:#000000"></div>
<div class="a " style="left:10px;top:766px;width:1px;height:15px;background:#848284"></div>
<div class="a " style="left:11px;top:766px;width:1px;height:15px;background:#000000"></div>
<div class="a dg" style="left:12px;top:767px;width:15px;height:14px;background:#c6c4c6;border:1px solid;border-color:#fff #848284 #848284 #fff"></div>
<div class="a dg" style="left:27px;top:767px;width:15px;height:14px;background:#c6c4c6;border:1px solid;border-color:#fff #848284 #848284 #fff"></div>
<div class="a dg" style="left:42px;top:767px;width:15px;height:14px;background:#c6c4c6;border:1px solid;border-color:#fff #848284 #848284 #fff"></div>
<div class="a dg" style="left:57px;top:767px;width:15px;height:14px;background:#c6c4c6;border:1px solid;border-color:#fff #848284 #848284 #fff"></div>
<svg style="left:12px;top:767px" width="15" height="14" viewBox="0 0 15 14" shape-rendering="crispEdges" ><path d="M3 3h1v8h-1zM9 3v8l-4-4z" fill="#000" shape-rendering="auto"/></svg>
<svg style="left:27px;top:767px" width="15" height="14" viewBox="0 0 15 14" shape-rendering="crispEdges" ><path d="M9 3v8l-4-4z" fill="#000" shape-rendering="auto"/></svg>
<svg style="left:42px;top:767px" width="15" height="14" viewBox="0 0 15 14" shape-rendering="crispEdges" ><path d="M6 3v8l4-4z" fill="#000" shape-rendering="auto"/></svg>
<svg style="left:57px;top:767px" width="15" height="14" viewBox="0 0 15 14" shape-rendering="crispEdges" ><path d="M5 3v8l4-4zM10 3h1v8h-1z" fill="#000" shape-rendering="auto"/></svg>
<svg style="left:0;top:0" width="620" height="812" viewBox="0 0 620 812" shape-rendering="crispEdges"><polygon points="340,766 346.5,780.5 391,780.5 398,766" fill="#fff"/><rect x="341" y="766" width="56" height="1" fill="#fff"/><rect x="346" y="780" width="46" height="2" fill="#fff"/><path d="M79 780.5H124M130 780.5H173M179 780.5H223M229 780.5H271M277 780.5H340M397 780.5H442" stroke="#848284" fill="none"/><path d="M72.5 766.5L79.5 780.5M124.5 780.5L131 766.5M127.5 774L130.5 780.5M173.5 780.5L180 766.5M176.5 774L179.5 780.5M223.5 780.5L230 766.5M226.5 774L229.5 780.5M271.5 780.5L278 766.5M274.5 774L277.5 780.5M340 766.5L346.5 780.5M340.5 780.5L343.5 774M391.5 780.5L398.5 766.5M394.5 774L397.5 780.5M442.5 780.5L449 766.5" stroke="#000" stroke-width="1.1" fill="none" shape-rendering="auto"/></svg>
<div class="a t tb" style="left:83.5px;top:767px;font-size:11px;line-height:13px">Sheet1</div>
<div class="a t tb" style="left:135.5px;top:767px;font-size:11px;line-height:13px">Chart1</div>
<div class="a t tb" style="left:184.5px;top:767px;font-size:11px;line-height:13px">Chart3</div>
<div class="a t tb" style="left:233px;top:767px;font-size:11px;line-height:13px">Chart4</div>
<div class="a t tb" style="left:282.5px;top:767px;font-size:11px;line-height:13px">Chart4 (2)</div>
<div class="a t tb" style="left:348px;top:767px;font-size:11px;line-height:13px;font-weight:bold;letter-spacing:0.5px">Sheet2</div>
<div class="a t tb" style="left:402px;top:767px;font-size:11px;line-height:13px">Sheet3</div>
<div class="a " style="left:616px;top:766px;width:2px;height:15px;background:#ffffff"></div>
<div class="a " style="left:618px;top:766px;width:2px;height:15px;background:#c6c4c6"></div>
<div class="a " style="left:620px;top:766px;width:1px;height:15px;background:#000000"></div>
<div class="a " style="left:621px;top:767px;width:15px;height:14px;background:#c6c4c6;border:1px solid;border-color:#fff #848284 #848284 #fff"></div>
<svg style="left:621px;top:767px" width="15" height="14" viewBox="0 0 15 14" shape-rendering="crispEdges" ><path d="M8 3v7l-4-3.5z" fill="#000" shape-rendering="auto"/></svg>
<div class="a " style="left:636px;top:766px;width:1px;height:15px;background:#000000"></div>
<div class="a dg" style="left:638px;top:767px;width:333px;height:14px;border:1px solid;border-color:#fff #848284 #848284 #fff"></div>
<div class="a " style="left:971px;top:766px;width:26px;height:15px;background:repeating-conic-gradient(#000 0 25%,#fff 0 50%) 0 0/2px 2px"></div>
<div class="a " style="left:997px;top:767px;width:14px;height:14px;background:#c6c4c6;border:1px solid;border-color:#fff #848284 #848284 #fff"></div>
<svg style="left:997px;top:767px" width="14" height="14" viewBox="0 0 14 14" shape-rendering="crispEdges" ><path d="M6 3v7l4-3.5z" fill="#000" shape-rendering="auto"/></svg>
<div class="a " style="left:1011px;top:766px;width:1px;height:15px;background:#000000"></div>
<div class="a " style="left:1012px;top:766px;width:5px;height:15px;background:#c6c4c6"></div>
<div class="a " style="left:1013px;top:767px;width:2px;height:14px;background:#ffffff"></div>
<div class="a " style="left:1017px;top:766px;width:1px;height:15px;background:#000000"></div>
<div class="a " style="left:1017px;top:766px;width:12px;height:1px;background:#000000"></div>
<div class="a dg" style="left:10px;top:783px;width:1020px;height:19px;"></div>
<div class="a " style="left:10px;top:802px;width:1020px;height:2px;background:#ffffff"></div>
<div class="a " style="left:7px;top:804px;width:1030px;height:1px;background:#000000"></div>
<div class="a t " style="left:16.5px;top:788px;font-size:12.5px;line-height:13px">Edit</div>
<div class="a " style="left:664px;top:784px;width:1px;height:16px;background:#848284"></div>
<div class="a " style="left:665px;top:784px;width:2px;height:16px;background:#ffffff"></div>
<div class="a " style="left:672px;top:786px;width:33px;height:1px;background:#848284"></div>
<div class="a " style="left:672px;top:786px;width:1px;height:14px;background:#848284"></div>
<div class="a " style="left:705px;top:786px;width:2px;height:14px;background:#ffffff"></div>
<div class="a " style="left:708px;top:786px;width:130px;height:1px;background:#848284"></div>
<div class="a " style="left:708px;top:786px;width:1px;height:14px;background:#848284"></div>
<div class="a " style="left:838px;top:786px;width:2px;height:14px;background:#ffffff"></div>
<div class="a " style="left:841px;top:786px;width:27px;height:1px;background:#848284"></div>
<div class="a " style="left:841px;top:786px;width:1px;height:14px;background:#848284"></div>
<div class="a " style="left:868px;top:786px;width:2px;height:14px;background:#ffffff"></div>
<div class="a " style="left:871px;top:786px;width:34px;height:1px;background:#848284"></div>
<div class="a " style="left:871px;top:786px;width:1px;height:14px;background:#848284"></div>
<div class="a " style="left:905px;top:786px;width:2px;height:14px;background:#ffffff"></div>
<div class="a " style="left:908px;top:786px;width:28px;height:1px;background:#848284"></div>
<div class="a " style="left:908px;top:786px;width:1px;height:14px;background:#848284"></div>
<div class="a " style="left:936px;top:786px;width:2px;height:14px;background:#ffffff"></div>
<div class="a " style="left:940px;top:786px;width:34px;height:1px;background:#848284"></div>
<div class="a " style="left:940px;top:786px;width:1px;height:14px;background:#848284"></div>
<div class="a " style="left:974px;top:786px;width:2px;height:14px;background:#ffffff"></div>
<div class="a " style="left:977px;top:786px;width:28px;height:1px;background:#848284"></div>
<div class="a " style="left:977px;top:786px;width:1px;height:14px;background:#848284"></div>
<div class="a " style="left:1005px;top:786px;width:2px;height:14px;background:#ffffff"></div>
<div class="a " style="left:1008px;top:786px;width:32px;height:1px;background:#848284"></div>
<div class="a " style="left:1008px;top:786px;width:1px;height:14px;background:#848284"></div>
<div class="a " style="left:1040px;top:786px;width:2px;height:14px;background:#ffffff"></div>
<svg class="tb" style="left:0;top:0" width="660" height="128" viewBox="0 0 660 128" shape-rendering="crispEdges"><g transform="translate(1,1)" class="ew"><path d="M25.5 82.5H33.5L36.5 85.5V95.5H25.5ZM33.5 82.5V85.5H36.5" stroke-width="1" fill="none"/></g><g class="eg"><path d="M25.5 82.5H33.5L36.5 85.5V95.5H25.5ZM33.5 82.5V85.5H36.5" stroke-width="1" fill="none"/></g>
<g transform="translate(1,1)"><path d="M47 95.5H58.5L62.5 89.5" stroke="#fff" fill="none" shape-rendering="auto"/></g><path d="M46 95L50 89H62L58 95Z" fill="#848284" shape-rendering="auto"/><path d="M46.5 95V86.5H47.5L48.5 85.5H51.5L52.5 86.5H57.5V89" stroke="#848284" fill="none"/><path d="M47 87h1v1h-1zM49 87h1v1h-1zM51 87h1v1h-1zM53 87h1v1h-1zM55 87h1v1h-1zM48 88h1v1h-1zM47 89h1v1h-1zM47 91h1v1h-1z" fill="#fff"/><path d="M55 83.5Q58 81.5 60.5 84.5" stroke="#848284" fill="none" shape-rendering="auto"/><path d="M61.5 82V85.5H58" stroke="#848284" fill="none"/><path d="M62.5 83V86.5H59" stroke="#fff" fill="none"/>
<rect x="70" y="82" width="15" height="14" fill="#000"/><rect x="71" y="83" width="2" height="12" fill="#848200"/><rect x="82" y="83" width="2" height="12" fill="#848200"/><rect x="73" y="89" width="9" height="1" fill="#848200"/><rect x="73" y="83" width="9" height="6" fill="#c6c4c6"/><rect x="73" y="83" width="9" height="1" fill="#fff"/><rect x="83" y="83" width="1" height="1" fill="#fff"/><rect x="79" y="92" width="2" height="3" fill="#c6c4c6"/><rect x="79" y="92" width="2" height="1" fill="#fff"/>
<g transform="translate(1,1)" class="ew"><path d="M102.5 86.5L104.5 82.5H112.5L110.5 86.5M104 84.5H110M103 85.5H109" stroke-width="1" fill="none" shape-rendering="auto"/><path d="M98.5 92.5V88.5L100.5 86.5H111.5L113.5 88.5V92.5ZM99 89.5H113M100.5 93V95.5H111.5V93" stroke-width="1" fill="none"/><path d="M105 91h3v1h-3z" stroke="none" class="f"/></g><g class="eg"><path d="M102.5 86.5L104.5 82.5H112.5L110.5 86.5M104 84.5H110M103 85.5H109" stroke-width="1" fill="none" shape-rendering="auto"/><path d="M98.5 92.5V88.5L100.5 86.5H111.5L113.5 88.5V92.5ZM99 89.5H113M100.5 93V95.5H111.5V93" stroke-width="1" fill="none"/><path d="M105 91h3v1h-3z" stroke="none" class="f"/></g>
<g transform="translate(1,1)" class="ew"><path d="M121.5 81.5H129.5L132.5 84.5V95.5H121.5Z" stroke-width="1" fill="none"/><circle cx="131" cy="89.5" r="3.5" stroke-width="1" fill="none" shape-rendering="auto"/><path d="M133.5 92.5L137 96" stroke-width="2" fill="none" shape-rendering="auto"/></g><g class="eg"><path d="M121.5 81.5H129.5L132.5 84.5V95.5H121.5Z" stroke-width="1" fill="none"/><circle cx="131" cy="89.5" r="3.5" stroke-width="1" fill="none" shape-rendering="auto"/><path d="M133.5 92.5L137 96" stroke-width="2" fill="none" shape-rendering="auto"/></g>
<text x="144.5" y="87" font-family="Liberation Mono,monospace" font-size="7.5" font-weight="bold" textLength="12" lengthAdjust="spacingAndGlyphs" fill="#000">ABC</text><path d="M145.5 90.5L149.5 95L159.5 84" stroke="#000084" stroke-width="2" fill="none" shape-rendering="auto"/>
<path d="M178.5 82V86L181.5 91M183.5 82V86L180.5 91" stroke="#000" stroke-width="1.2" fill="none" shape-rendering="auto"/><ellipse cx="178" cy="93.5" rx="1.8" ry="2.4" stroke="#000084" stroke-width="1.2" fill="none" shape-rendering="auto"/><ellipse cx="183.5" cy="93.5" rx="1.8" ry="2.4" stroke="#000084" stroke-width="1.2" fill="none" shape-rendering="auto"/>
<path d="M196.5 82.5H201.5L203.5 84.5V91.5H196.5Z" stroke="#000" fill="#fff"/><path d="M198 85H201M198 87H202M198 89H202" stroke="#000" fill="none"/><path d="M202.5 85.5H208.5L210.5 87.5V95.5H202.5Z" stroke="#000084" fill="#fff"/><path d="M208.5 85.5V87.5H210.5" stroke="#000084" fill="none"/><path d="M204 88.5H207M204 90.5H209M204 92.5H209" stroke="#000" fill="none"/>
<rect x="220" y="84" width="14" height="12" fill="#fff"/><rect x="219" y="83" width="14" height="12" fill="#848284"/><rect x="222" y="82" width="8" height="2" fill="#848284"/><rect x="223" y="85" width="6" height="1" fill="#fff"/><rect x="227" y="90" width="9" height="7" fill="#fff"/><path d="M226.5 89.5H232.5L234.5 91.5V95.5H226.5Z" stroke="#848284" fill="#c6c4c6"/><path d="M228 91.5H231M228 93.5H233" stroke="#fff" fill="none"/>
<g transform="translate(1,1)" class="ew"><path d="M257.5 82L254 85.5" stroke-width="3" fill="none" shape-rendering="auto"/><path d="M250 84.5L254.5 89" stroke-width="1.5" fill="none" shape-rendering="auto"/><path d="M249.5 85.5L243 88L249 94.5L253.5 89.5ZM245 88.5L250 93.5M247 87.5L252 92.5" stroke-width="1" fill="none" shape-rendering="auto"/><path d="M242 95.5h1M244 95.5h1M246 95.5h1" stroke-width="1" fill="none"/></g><g class="eg"><path d="M257.5 82L254 85.5" stroke-width="3" fill="none" shape-rendering="auto"/><path d="M250 84.5L254.5 89" stroke-width="1.5" fill="none" shape-rendering="auto"/><path d="M249.5 85.5L243 88L249 94.5L253.5 89.5ZM245 88.5L250 93.5M247 87.5L252 92.5" stroke-width="1" fill="none" shape-rendering="auto"/><path d="M242 95.5h1M244 95.5h1M246 95.5h1" stroke-width="1" fill="none"/></g>
<g transform="translate(1,1)" class="ew"><path d="M273 85V91H279Z" stroke="none" class="f" shape-rendering="auto"/><path d="M276.5 88.5Q279 84.5 282.5 85Q286 86 285 89.5Q284.5 91.5 282 92.5" stroke-width="1.6" fill="none" shape-rendering="auto"/></g><g class="eg"><path d="M273 85V91H279Z" stroke="none" class="f" shape-rendering="auto"/><path d="M276.5 88.5Q279 84.5 282.5 85Q286 86 285 89.5Q284.5 91.5 282 92.5" stroke-width="1.6" fill="none" shape-rendering="auto"/></g><path d="M294 88h5v1h-5zM295 89h3v1h-3zM296 90h1v1h-1z" fill="#fff" transform="translate(1,1)"/><path d="M294 88h5v1h-5zM295 89h3v1h-3zM296 90h1v1h-1z" fill="#848284"/>
<g transform="translate(1,1)" class="ew"><path d="M320 85V91H314Z" stroke="none" class="f" shape-rendering="auto"/><path d="M316.5 88.5Q314 84.5 310.5 85Q307 86 308 89.5Q308.5 91.5 311 92.5" stroke-width="1.6" fill="none" shape-rendering="auto"/></g><g class="eg"><path d="M320 85V91H314Z" stroke="none" class="f" shape-rendering="auto"/><path d="M316.5 88.5Q314 84.5 310.5 85Q307 86 308 89.5Q308.5 91.5 311 92.5" stroke-width="1.6" fill="none" shape-rendering="auto"/></g><path d="M327 88h5v1h-5zM328 89h3v1h-3zM329 90h1v1h-1z" fill="#fff" transform="translate(1,1)"/><path d="M327 88h5v1h-5zM328 89h3v1h-3zM329 90h1v1h-1z" fill="#848284"/>
<circle cx="351.5" cy="86.5" r="5.7" fill="#848284" shape-rendering="auto"/><path d="M348 85.5L350.5 83" stroke="#fff" stroke-width="1" fill="none" shape-rendering="auto"/><rect x="353" y="86" width="1" height="1" fill="#fff"/><rect x="354" y="88" width="1" height="1" fill="#fff"/><path d="M357.5 85V90.5" stroke="#fff" fill="none"/><rect x="350.5" y="92.5" width="10" height="4" rx="2" stroke="#fff" fill="none" shape-rendering="auto"/><rect x="349.5" y="91.5" width="10" height="4" rx="2" stroke="#848284" fill="#c6c4c6" shape-rendering="auto"/><rect x="352" y="93" width="5" height="1" fill="#848284"/>
<circle cx="374" cy="87" r="5.6" fill="#0000ff" stroke="#000" stroke-width="0.8" shape-rendering="auto"/><path d="M371 82.5L376 82L378 84L376 86L377.5 89L374.5 91.5L372.5 89L374 86.5L371.5 86Z" fill="#008200" shape-rendering="auto"/><path d="M370 83.5L372 82" stroke="#fff" stroke-width="1.2" shape-rendering="auto"/><path d="M376.5 84.5H380.5V82L384.5 86L380.5 90V87.5H376.5Z" fill="#00ffff" stroke="#000" stroke-width="1" shape-rendering="auto"/><path d="M379.5 92H376.5V90L372.5 93.5L376.5 97V95H379.5Z" fill="#00ffff" stroke="#000" stroke-width="1" shape-rendering="auto"/>
<text x="399.5" y="93.5" font-family="Liberation Serif,serif" font-size="14.5" fill="#000" stroke="#000" stroke-width="0.3" textLength="9.5" lengthAdjust="spacingAndGlyphs">Σ</text>
<text x="421" y="93" font-family="Liberation Serif,serif" font-size="15" font-style="italic" font-weight="bold" fill="#000">f</text><text x="427.5" y="93" font-family="Liberation Serif,serif" font-size="9" font-style="italic" font-weight="bold" fill="#000">x</text>
<g transform="translate(1,1)" class="ew"><text x="444" y="88" font-family="Liberation Sans,sans-serif" font-size="9" font-weight="bold" textLength="7" lengthAdjust="spacingAndGlyphs" stroke="none" class="f">A</text><text x="444" y="96" font-family="Liberation Sans,sans-serif" font-size="9" font-weight="bold" textLength="7" lengthAdjust="spacingAndGlyphs" stroke="none" class="f">Z</text><path d="M455.5 81V93" stroke-width="1" fill="none"/><path d="M453 91h5v1h-5zM453 92h5v1h-5zM454 93h3v2h-3zM455 95h1v1h-1z" stroke="none" class="f"/></g><g class="eg"><text x="444" y="88" font-family="Liberation Sans,sans-serif" font-size="9" font-weight="bold" textLength="7" lengthAdjust="spacingAndGlyphs" stroke="none" class="f">A</text><text x="444" y="96" font-family="Liberation Sans,sans-serif" font-size="9" font-weight="bold" textLength="7" lengthAdjust="spacingAndGlyphs" stroke="none" class="f">Z</text><path d="M455.5 81V93" stroke-width="1" fill="none"/><path d="M453 91h5v1h-5zM453 92h5v1h-5zM454 93h3v2h-3zM455 95h1v1h-1z" stroke="none" class="f"/></g>
<g transform="translate(1,1)" class="ew"><text x="467" y="88" font-family="Liberation Sans,sans-serif" font-size="9" font-weight="bold" textLength="7" lengthAdjust="spacingAndGlyphs" stroke="none" class="f">Z</text><text x="467" y="96" font-family="Liberation Sans,sans-serif" font-size="9" font-weight="bold" textLength="7" lengthAdjust="spacingAndGlyphs" stroke="none" class="f">A</text><path d="M478.5 81V93" stroke-width="1" fill="none"/><path d="M476 91h5v1h-5zM476 92h5v1h-5zM477 93h3v2h-3zM478 95h1v1h-1z" stroke="none" class="f"/></g><g class="eg"><text x="467" y="88" font-family="Liberation Sans,sans-serif" font-size="9" font-weight="bold" textLength="7" lengthAdjust="spacingAndGlyphs" stroke="none" class="f">Z</text><text x="467" y="96" font-family="Liberation Sans,sans-serif" font-size="9" font-weight="bold" textLength="7" lengthAdjust="spacingAndGlyphs" stroke="none" class="f">A</text><path d="M478.5 81V93" stroke-width="1" fill="none"/><path d="M476 91h5v1h-5zM476 92h5v1h-5zM477 93h3v2h-3zM478 95h1v1h-1z" stroke="none" class="f"/></g>
<path d="M496 97V86L499 82H500V86L503 83H507L512 87V97Z" fill="#fff" shape-rendering="auto"/><path d="M495 96V85L498 81H499V85L502 82H506L511 86V96Z" fill="#848284" shape-rendering="auto"/><path d="M497 94.5H509M499.5 82V87" stroke="#fff" fill="none"/><path d="M496 86h1v1h-1zM497 88h1v1h-1zM496 90h1v1h-1zM503 83h1v1h-1zM505 84h1v1h-1z" fill="#fff"/>
<circle cx="528" cy="88" r="6.5" fill="#fff" shape-rendering="auto"/><circle cx="527" cy="87.5" r="6.7" fill="#848284" shape-rendering="auto"/><path d="M522 96H531V94L529 92H524L522 94Z" fill="#848284" shape-rendering="auto"/><path d="M528.5 93.5L533.5 88.5" stroke="#fff" stroke-width="1.2" fill="none" shape-rendering="auto"/><path d="M522.5 86L524.5 84M524 82.5L525.5 81.5" stroke="#fff" stroke-width="1" fill="none" shape-rendering="auto"/><rect x="529" y="82" width="1" height="1" fill="#fff"/>
<path d="M545.5 84.5L548.5 81.5H554.5V86.5L551.5 89.5H545.5Z" fill="#ffff00" stroke="#000" shape-rendering="auto"/><path d="M551.5 84.5V89.5M545.5 84.5H551.5L554.5 81.5" stroke="#848200" fill="none" shape-rendering="auto"/><path d="M547 84.5H551.5V88.5" stroke="#fff" fill="none"/><path d="M547.5 85L541 92L547.5 95.5Z" fill="#0000c6" stroke="#000084" stroke-width="0.8" shape-rendering="auto"/><path d="M547.5 85V96" stroke="#000" stroke-width="1.2" fill="none" shape-rendering="auto"/><text x="542.5" y="93" font-family="Liberation Sans,sans-serif" font-size="6" font-weight="bold" fill="#c6c4c6">A</text><path d="M549 91L554.5 86.5L557.5 89.5L553 95Z" fill="#00aaaa" stroke="#000" stroke-width="1" shape-rendering="auto"/><path d="M551 89.5L555 86.8" stroke="#fff" stroke-width="1.6" shape-rendering="auto"/><circle cx="551" cy="93.5" r="3.2" fill="#00ffff" shape-rendering="auto"/>
<rect x="568.5" y="80.5" width="49" height="16" fill="none" stroke="#fff"/><text x="570.5" y="92" font-family="Liberation Sans,sans-serif" font-size="11" fill="#848284" textLength="28.5" lengthAdjust="spacingAndGlyphs">100%</text><path d="M609 87h5v1h-5zM610 88h3v1h-3zM611 89h1v1h-1z" fill="#000000"/>
<path d="M631.5 81.5H642.5V91.5H640.5L641.5 95.5L637.5 91.5H631.5Z" fill="#fff" stroke="#000" shape-rendering="auto"/><path d="M633 83h1v1h-1zM635 83h1v1h-1zM637 83h1v1h-1zM639 83h1v1h-1zM641 83h1v1h-1zM634 85h1v1h-1zM640 85h1v1h-1zM641 87h1v1h-1zM640 89h1v1h-1zM638 90h1v1h-1zM636 90h1v1h-1zM633 90h1v1h-1z" fill="#ffff00"/><text x="634.5" y="91.5" font-family="Liberation Serif,serif" font-size="12.5" font-weight="bold" fill="#000084">?</text><circle cx="632" cy="89" r="3.3" fill="#ffff00" stroke="#000" stroke-width="1" shape-rendering="auto"/><path d="M631 92.5V95.5H633.5V92.5" fill="#fff" stroke="#000" stroke-width="1" shape-rendering="auto"/>
<rect x="22" y="107" width="130" height="15" fill="#fff"/><rect x="142" y="108" width="9" height="13" fill="#c6c4c6"/><path d="M144 113h5v1h-5zM145 114h3v1h-3zM146 115h1v1h-1z" fill="#000000"/>
<rect x="156" y="107" width="36" height="15" fill="#fff"/><rect x="182" y="108" width="9" height="13" fill="#c6c4c6"/><path d="M184 113h5v1h-5zM185 114h3v1h-3zM186 115h1v1h-1z" fill="#000000"/>
<g transform="translate(1,1)" class="ew"><path d="M278 109h15v1h-15zM278 111h10v1h-10zM278 113h15v1h-15zM278 115h10v1h-10zM278 117h15v1h-15zM278 119h10v1h-10z" stroke="none" class="f"/></g><g class="eg"><path d="M278 109h15v1h-15zM278 111h10v1h-10zM278 113h15v1h-15zM278 115h10v1h-10zM278 117h15v1h-15zM278 119h10v1h-10z" stroke="none" class="f"/></g>
<g transform="translate(1,1)" class="ew"><path d="M301 109h15v1h-15zM304 111h9v1h-9zM301 113h15v1h-15zM304 115h9v1h-9zM301 117h15v1h-15zM304 119h9v1h-9z" stroke="none" class="f"/></g><g class="eg"><path d="M301 109h15v1h-15zM304 111h9v1h-9zM301 113h15v1h-15zM304 115h9v1h-9zM301 117h15v1h-15zM304 119h9v1h-9z" stroke="none" class="f"/></g>
<g transform="translate(1,1)" class="ew"><path d="M324 109h15v1h-15zM329 111h10v1h-10zM324 113h15v1h-15zM329 115h10v1h-10zM324 117h15v1h-15zM329 119h10v1h-10z" stroke="none" class="f"/></g><g class="eg"><path d="M324 109h15v1h-15zM329 111h10v1h-10zM324 113h15v1h-15zM329 115h10v1h-10zM324 117h15v1h-15zM329 119h10v1h-10z" stroke="none" class="f"/></g>
<g transform="translate(1,1)" class="ew"><rect x="347.5" y="107.5" width="15" height="14" stroke-width="1" fill="none"/><path d="M348 110.5H362M348 118.5H362M355.5 108V110M355.5 119V121" stroke-width="1" fill="none"/><path d="M349 114.5H352M358 114.5H361M350.5 113V116M359.5 113V116" stroke-width="1" fill="none"/><text x="352" y="117.5" font-family="Liberation Sans,sans-serif" font-size="7" font-weight="bold" stroke="none" class="f">a</text></g><g class="eg"><rect x="347.5" y="107.5" width="15" height="14" stroke-width="1" fill="none"/><path d="M348 110.5H362M348 118.5H362M355.5 108V110M355.5 119V121" stroke-width="1" fill="none"/><path d="M349 114.5H352M358 114.5H361M350.5 113V116M359.5 113V116" stroke-width="1" fill="none"/><text x="352" y="117.5" font-family="Liberation Sans,sans-serif" font-size="7" font-weight="bold" stroke="none" class="f">a</text></g>
<text x="379" y="120" font-family="Liberation Sans,sans-serif" font-size="14" stroke-width="0.4" textLength="10" lengthAdjust="spacingAndGlyphs" fill="#fff" stroke="#fff" transform="translate(1,1)">$</text><text x="379" y="120" font-family="Liberation Sans,sans-serif" font-size="14" stroke-width="0.4" textLength="10" lengthAdjust="spacingAndGlyphs" fill="#848284" stroke="#848284">$</text>
<text x="401" y="120" font-family="Liberation Sans,sans-serif" font-size="14" stroke-width="0.4" textLength="14" lengthAdjust="spacingAndGlyphs" fill="#fff" stroke="#fff" transform="translate(1,1)">%</text><text x="401" y="120" font-family="Liberation Sans,sans-serif" font-size="14" stroke-width="0.4" textLength="14" lengthAdjust="spacingAndGlyphs" fill="#848284" stroke="#848284">%</text>
<text x="427" y="119.5" font-family="Liberation Serif,serif" font-size="20" font-weight="bold" fill="#fff" transform="translate(1,1)">,</text><text x="427" y="119.5" font-family="Liberation Serif,serif" font-size="20" font-weight="bold" fill="#848284">,</text>
<g transform="translate(1,1)" class="ew"><path d="M446 110.5H451M447.5 109V112M448.5 108.5V113" stroke-width="1" fill="none"/></g><g class="eg"><path d="M446 110.5H451M447.5 109V112M448.5 108.5V113" stroke-width="1" fill="none"/></g><text x="452.5" y="114" font-family="Liberation Sans,sans-serif" font-size="8" font-weight="bold" fill="#fff" transform="translate(1,1)">.0</text><text x="452.5" y="114" font-family="Liberation Sans,sans-serif" font-size="8" font-weight="bold" fill="#848284">.0</text><text x="447.5" y="121" font-family="Liberation Sans,sans-serif" font-size="8" font-weight="bold" textLength="13" lengthAdjust="spacingAndGlyphs" fill="#fff" transform="translate(1,1)">.00</text><text x="447.5" y="121" font-family="Liberation Sans,sans-serif" font-size="8" font-weight="bold" textLength="13" lengthAdjust="spacingAndGlyphs" fill="#848284">.00</text>
<text x="470.5" y="114" font-family="Liberation Sans,sans-serif" font-size="8" font-weight="bold" textLength="13" lengthAdjust="spacingAndGlyphs" fill="#fff" transform="translate(1,1)">.00</text><text x="470.5" y="114" font-family="Liberation Sans,sans-serif" font-size="8" font-weight="bold" textLength="13" lengthAdjust="spacingAndGlyphs" fill="#848284">.00</text><g transform="translate(1,1)" class="ew"><path d="M469 118.5H474M472.5 117V120M471.5 116.5V121" stroke-width="1" fill="none"/></g><g class="eg"><path d="M469 118.5H474M472.5 117V120M471.5 116.5V121" stroke-width="1" fill="none"/></g><text x="476" y="121" font-family="Liberation Sans,sans-serif" font-size="8" font-weight="bold" fill="#fff" transform="translate(1,1)">.0</text><text x="476" y="121" font-family="Liberation Sans,sans-serif" font-size="8" font-weight="bold" fill="#848284">.0</text>
<g transform="translate(1,1)" class="ew"><path d="M499 108.5H513M504 110.5H513M504 112.5H513M504 114.5H510M504 116.5H513M499 118.5H513M499 120.5H509" stroke-width="1" fill="none"/><path d="M504.5 107V123" stroke-width="1" fill="none"/><path d="M497 112.5L500 110V115Z" stroke="none" class="f" shape-rendering="auto"/><path d="M499 112.5H503" stroke-width="1" fill="none"/></g><g class="eg"><path d="M499 108.5H513M504 110.5H513M504 112.5H513M504 114.5H510M504 116.5H513M499 118.5H513M499 120.5H509" stroke-width="1" fill="none"/><path d="M504.5 107V123" stroke-width="1" fill="none"/><path d="M497 112.5L500 110V115Z" stroke="none" class="f" shape-rendering="auto"/><path d="M499 112.5H503" stroke-width="1" fill="none"/></g>
<g transform="translate(1,1)" class="ew"><path d="M522 108.5H536M527 110.5H536M527 112.5H536M527 114.5H533M527 116.5H536M522 118.5H536M522 120.5H532" stroke-width="1" fill="none"/><path d="M527.5 107V123" stroke-width="1" fill="none"/><path d="M525 112.5L522 110V115Z" stroke="none" class="f" shape-rendering="auto"/><path d="M520 112.5H523" stroke-width="1" fill="none"/></g><g class="eg"><path d="M522 108.5H536M527 110.5H536M527 112.5H536M527 114.5H533M527 116.5H536M522 118.5H536M522 120.5H532" stroke-width="1" fill="none"/><path d="M527.5 107V123" stroke-width="1" fill="none"/><path d="M525 112.5L522 110V115Z" stroke="none" class="f" shape-rendering="auto"/><path d="M520 112.5H523" stroke-width="1" fill="none"/></g>
<path d="M551 109h1v1h-1zM551 111h1v1h-1zM551 113h1v1h-1zM551 115h1v1h-1zM551 117h1v1h-1zM551 119h1v1h-1zM557 109h1v1h-1zM557 111h1v1h-1zM557 113h1v1h-1zM557 115h1v1h-1zM557 117h1v1h-1zM557 119h1v1h-1zM563 109h1v1h-1zM563 111h1v1h-1zM563 113h1v1h-1zM563 115h1v1h-1zM563 117h1v1h-1zM563 119h1v1h-1zM551 109h1v1h-1zM553 109h1v1h-1zM555 109h1v1h-1zM557 109h1v1h-1zM559 109h1v1h-1zM561 109h1v1h-1zM563 109h1v1h-1zM551 115h1v1h-1zM553 115h1v1h-1zM555 115h1v1h-1zM557 115h1v1h-1zM559 115h1v1h-1zM561 115h1v1h-1zM563 115h1v1h-1z" fill="#848284"/><rect x="551" y="121" width="14" height="1" fill="#000"/><path d="M571 114h5v1h-5zM572 115h3v1h-3zM573 116h1v1h-1z" fill="#000000"/>
<path d="M585.5 113.5L591.5 108.5L596.5 113.5L590.5 118.5Z" fill="#fff" stroke="#000" stroke-width="1" shape-rendering="auto"/><path d="M589 117L595 112.5L596 113.5L590.5 118Z" fill="#848284" shape-rendering="auto"/><path d="M588.5 111.5V108.5Q588.5 106.5 590 106.5Q591.5 106.5 591.5 108.5V113" stroke="#000084" stroke-width="1.2" fill="none" shape-rendering="auto"/><path d="M595 110Q598.5 110.5 598.5 116L596.5 116.5Q597 113 595 112.5Z" fill="#000084" shape-rendering="auto"/><rect x="583" y="119" width="16" height="4" fill="#ffff00"/><path d="M605 114h5v1h-5zM606 115h3v1h-3zM607 116h1v1h-1z" fill="#000000"/>
<text x="616.5" y="118" font-family="Liberation Serif,serif" font-size="16.5" font-weight="bold" fill="#000084" textLength="14" lengthAdjust="spacingAndGlyphs">A</text><rect x="617" y="119" width="16" height="4" fill="#ff0000"/><path d="M639 114h5v1h-5zM640 115h3v1h-3zM641 116h1v1h-1z" fill="#000000"/>
<text x="205.5" y="119" font-family="Liberation Serif,serif" font-size="14.5" font-weight="bold" fill="#000" textLength="10" lengthAdjust="spacingAndGlyphs">B</text><text x="229.5" y="119" font-family="Liberation Serif,serif" font-size="14.5" font-weight="bold" font-style="italic" fill="#000" textLength="8" lengthAdjust="spacingAndGlyphs">I</text><text x="252" y="119" font-family="Liberation Serif,serif" font-size="14.5" font-weight="bold" fill="#000" textLength="9.5" lengthAdjust="spacingAndGlyphs">U</text><rect x="252" y="120" width="9" height="1" fill="#000"/></svg>
<div class="a " style="left:91px;top:78px;width:1px;height:22px;background:#848284"></div>
<div class="a " style="left:92px;top:78px;width:1px;height:22px;background:#ffffff"></div>
<div class="a " style="left:166px;top:78px;width:1px;height:22px;background:#848284"></div>
<div class="a " style="left:167px;top:78px;width:1px;height:22px;background:#ffffff"></div>
<div class="a " style="left:264px;top:78px;width:1px;height:22px;background:#848284"></div>
<div class="a " style="left:265px;top:78px;width:1px;height:22px;background:#ffffff"></div>
<div class="a " style="left:338px;top:78px;width:1px;height:22px;background:#848284"></div>
<div class="a " style="left:339px;top:78px;width:1px;height:22px;background:#ffffff"></div>
<div class="a " style="left:390px;top:78px;width:1px;height:22px;background:#848284"></div>
<div class="a " style="left:391px;top:78px;width:1px;height:22px;background:#ffffff"></div>
<div class="a " style="left:488px;top:78px;width:1px;height:22px;background:#848284"></div>
<div class="a " style="left:489px;top:78px;width:1px;height:22px;background:#ffffff"></div>
<div class="a " style="left:563px;top:78px;width:1px;height:22px;background:#848284"></div>
<div class="a " style="left:564px;top:78px;width:1px;height:22px;background:#ffffff"></div>
<div class="a " style="left:621px;top:78px;width:1px;height:22px;background:#848284"></div>
<div class="a " style="left:622px;top:78px;width:1px;height:22px;background:#ffffff"></div>
<div class="a " style="left:196px;top:104px;width:1px;height:22px;background:#848284"></div>
<div class="a " style="left:197px;top:104px;width:1px;height:22px;background:#ffffff"></div>
<div class="a " style="left:271px;top:104px;width:1px;height:22px;background:#848284"></div>
<div class="a " style="left:272px;top:104px;width:1px;height:22px;background:#ffffff"></div>
<div class="a " style="left:369px;top:104px;width:1px;height:22px;background:#848284"></div>
<div class="a " style="left:370px;top:104px;width:1px;height:22px;background:#ffffff"></div>
<div class="a " style="left:490px;top:104px;width:1px;height:22px;background:#848284"></div>
<div class="a " style="left:491px;top:104px;width:1px;height:22px;background:#ffffff"></div>
<div class="a " style="left:542px;top:104px;width:1px;height:22px;background:#848284"></div>
<div class="a " style="left:543px;top:104px;width:1px;height:22px;background:#ffffff"></div>
<div class="a t " style="left:24px;top:108px;font-size:11px;line-height:13px;letter-spacing:-0.3px">Arial</div>
<div class="a t " style="left:159px;top:108px;font-size:11px;line-height:13px;letter-spacing:-0.8px">10</div>
<svg style="left:21px;top:56px" width="17" height="16" viewBox="0 0 17 16" shape-rendering="crispEdges" ><rect x="5" y="2" width="11.5" height="14" fill="#000" shape-rendering="auto"/><path d="M4 1H12L15 4V15H4Z" fill="#fff" stroke="none"/><path d="M4.5 15V1.5H12" fill="none" stroke="#848284"/><path d="M12.5 1.5V4.5H15.5" fill="none" stroke="#000"/><path d="M12 1L16 5" stroke="#000" fill="none" shape-rendering="auto"/><path d="M7 8.5H13M7 10.5H13M7 12.5H13M9.5 7V14M12.5 7V14M6.5 7V14" stroke="#c6c4c6" fill="none"/><path d="M0.5 2.5L8 8.5M8 2.5L0.5 8.5" stroke="#000" stroke-width="3" fill="none" shape-rendering="auto"/><path d="M1 3L7.5 8M7.5 3L5.3 4.7M3.2 6.3L1 8" stroke="#00d6d6" stroke-width="1.3" fill="none" shape-rendering="auto"/></svg>
<svg style="left:12px;top:35px" width="17" height="16" viewBox="0 0 17 16" shape-rendering="crispEdges" ><path d="M1 2H5L8 6L12 2H15L9.5 8L15 14H11L8 10L5 14H1L6.5 8Z" fill="#000" shape-rendering="auto" transform="translate(1,1)"/><path d="M1 2H5L15 14H11Z" fill="#fff" shape-rendering="auto"/><path d="M2.5 3L12 14H14L4.5 3Z" fill="#00ffff" shape-rendering="auto"/><path d="M12 2H15L10 7.5L8.5 5.5Z" fill="#00c6c6" shape-rendering="auto"/><path d="M6 9L7.5 11L5 14H1Z" fill="#00c6c6" shape-rendering="auto"/></svg>
</div>
</body></html>
